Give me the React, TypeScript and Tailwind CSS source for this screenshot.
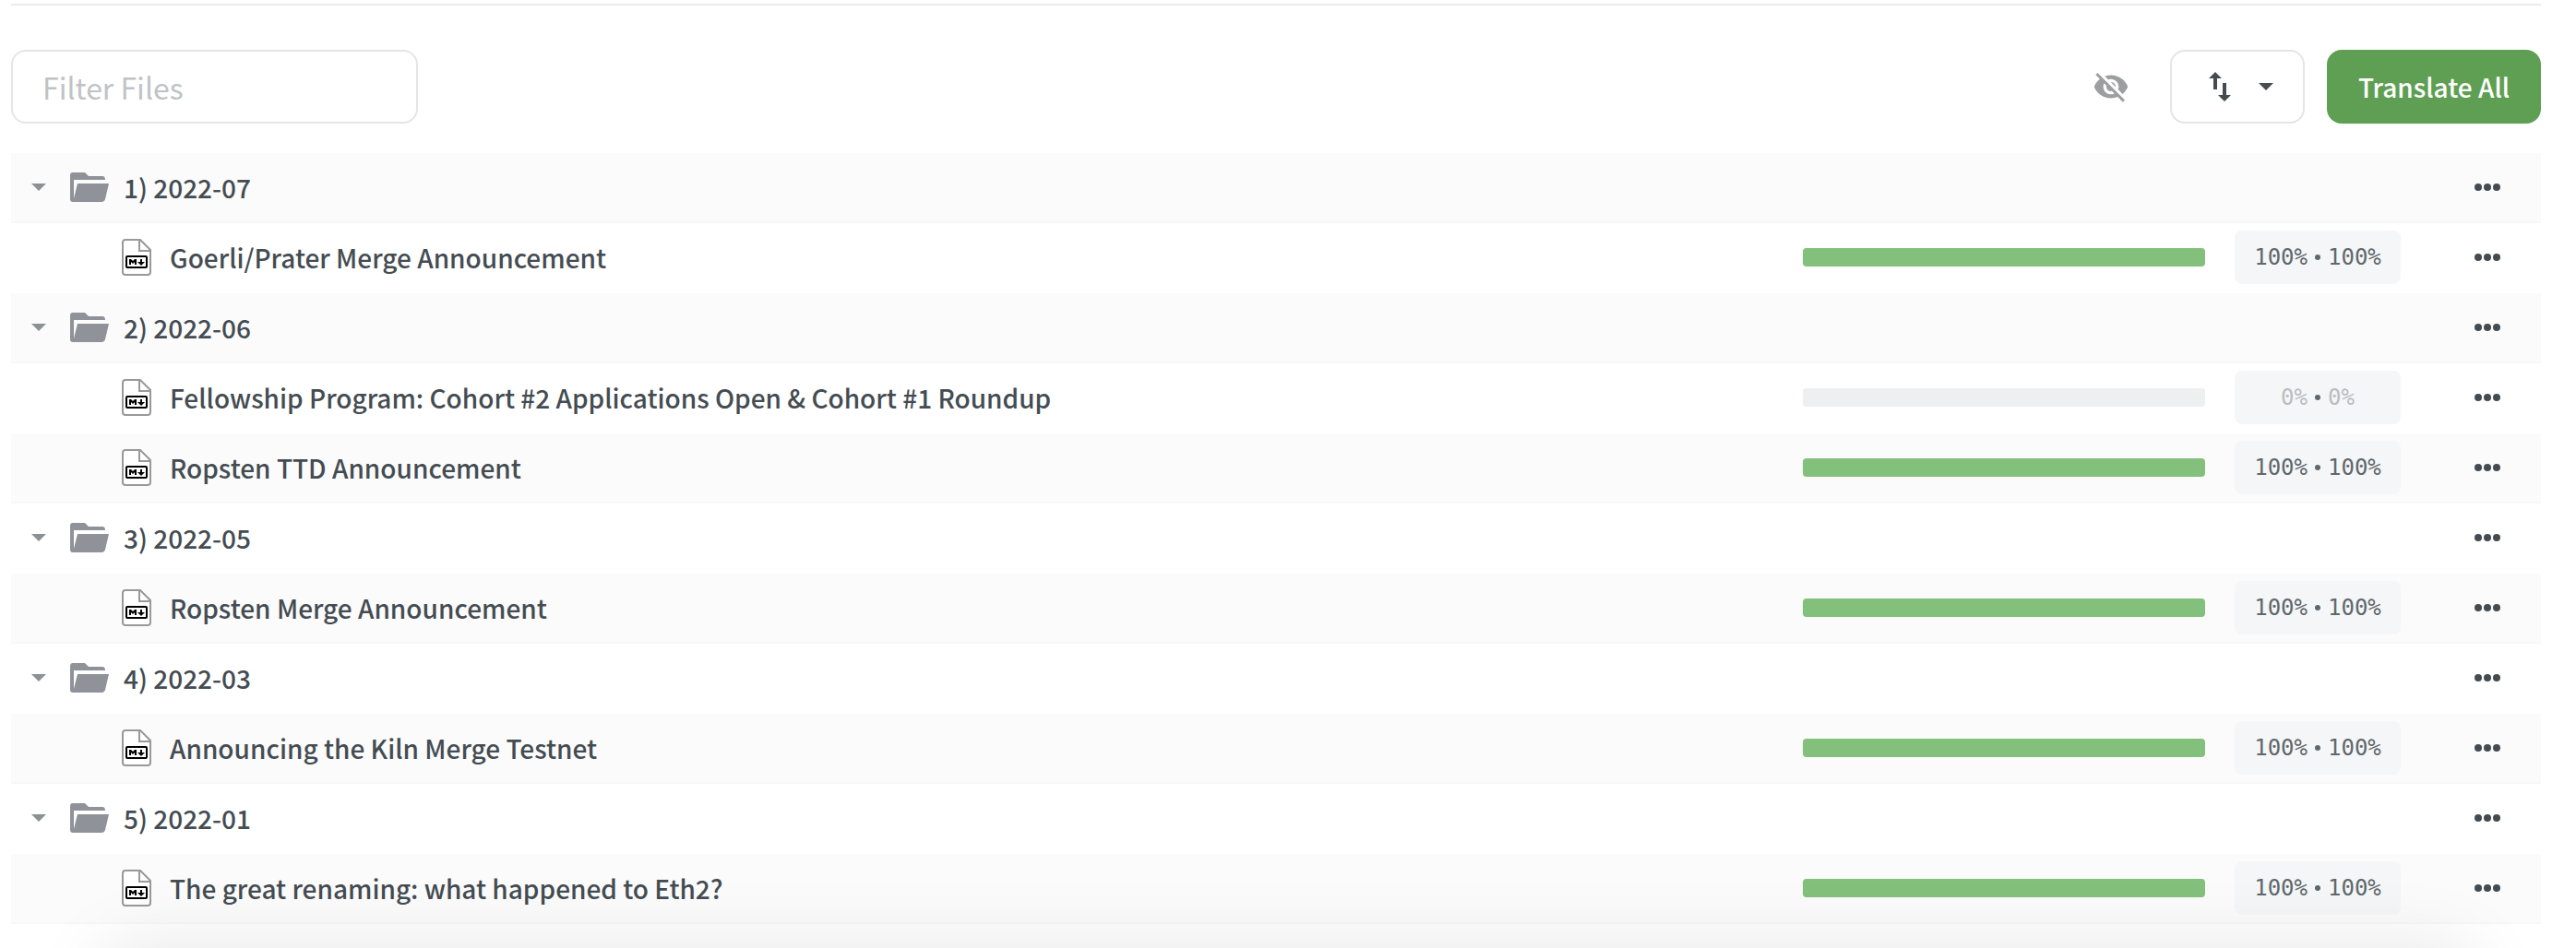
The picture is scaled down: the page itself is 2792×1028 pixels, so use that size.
import React from "react";

type Row =
  | { kind: "folder"; name: string }
  | { kind: "file"; name: string; translated: number; approved: number };

const rows: Row[] = [
  { kind: "folder", name: "1) 2022-07" },
  { kind: "file", name: "Goerli/Prater Merge Announcement", translated: 100, approved: 100 },
  { kind: "folder", name: "2) 2022-06" },
  { kind: "file", name: "Fellowship Program: Cohort #2 Applications Open & Cohort #1 Roundup", translated: 0, approved: 0 },
  { kind: "file", name: "Ropsten TTD Announcement", translated: 100, approved: 100 },
  { kind: "folder", name: "3) 2022-05" },
  { kind: "file", name: "Ropsten Merge Announcement", translated: 100, approved: 100 },
  { kind: "folder", name: "4) 2022-03" },
  { kind: "file", name: "Announcing the Kiln Merge Testnet", translated: 100, approved: 100 },
  { kind: "folder", name: "5) 2022-01" },
  { kind: "file", name: "The great renaming: what happened to Eth2?", translated: 100, approved: 100 },
];

function Caret() {
  return (
    <svg aria-hidden="true" viewBox="0 0 16 8" className="h-2 w-4 fill-current">
      <path d="M0 0h16L8 8z" />
    </svg>
  );
}

function FolderIcon() {
  return (
    <svg aria-hidden="true" viewBox="0 0 42 32" className="h-8 w-[42px] shrink-0 fill-[#8f9299]">
      <path d="M3 0h13l4 4h15q3 0 3 4H4v20L8 12h34l-4 17q-1 3-4 3H3q-3 0-3-3V3q0-3 3-3z" />
    </svg>
  );
}

function MarkdownFileIcon() {
  return (
    <svg aria-hidden="true" viewBox="0 0 32 40" className="h-10 w-8 shrink-0">
      <path d="M20 1H4Q1 1 1 4v32q0 3 3 3h24q3 0 3-3V12L20 1z" fill="#fff" stroke="#999" strokeWidth="2" />
      <path d="M19 1v12h12" fill="none" stroke="#999" strokeWidth="2" />
      <rect x="5" y="19" width="22" height="12" rx="1" fill="#fff" stroke="#000" strokeWidth="2" />
      <path d="M8 28v-6h2l2 2 2-2h2v6h-2v-3l-2 2-2-2v3zM20 22h2v3h3l-4 4-4-4h3z" fill="#000" />
    </svg>
  );
}

function MoreButton({ name }: { name: string }) {
  return (
    <button type="button" aria-label={`Actions for ${name}`} className="flex h-10 w-10 items-center justify-center text-[#444c52]">
      <svg aria-hidden="true" viewBox="0 0 28 8" className="h-2 w-7 fill-current">
        <circle cx="4" cy="4" r="4" />
        <circle cx="14" cy="4" r="4" />
        <circle cx="24" cy="4" r="4" />
      </svg>
    </button>
  );
}

function FileStatus({ row }: { row: Extract<Row, { kind: "file" }> }) {
  const tone = row.translated === 0 ? "text-[#b9bdbf]" : "text-[#5f686b]";
  return (
    <div className="flex items-center justify-end gap-8">
      <div
        role="progressbar"
        aria-label={`${row.name} progress`}
        aria-valuenow={row.translated}
        className="h-5 w-[436px] overflow-hidden rounded bg-[#eeeff0]"
      >
        <div className="h-full bg-[#83c07b]" style={{ width: `${row.translated}%` }} />
      </div>
      <div className="flex h-[58px] w-[180px] items-center justify-center gap-2 rounded-lg bg-[#f5f6f8] font-['DejaVu_Sans_Mono',monospace] text-[24px] font-normal">
        <span className={tone}>{row.translated}%</span>
        <span className="h-[6px] w-[6px] rounded-full bg-[#5f686b]" />
        <span className={tone}>{row.approved}%</span>
      </div>
    </div>
  );
}

export default function App() {
  return (
    <main className="relative min-h-screen overflow-hidden bg-white pt-1 pr-[38px] pl-3 font-['Noto_Sans_CJK_SC','Open_Sans',sans-serif] text-[#444c52]">
      <div className="border-t-2 border-[#ebebeb] pt-12 pb-8">
        <div className="flex items-center">
          <input
            type="text"
            aria-label="Filter Files"
            placeholder="Filter Files"
            className="h-20 w-[441px] rounded-2xl border-2 border-[#e5e5e5] px-8 text-[32px] outline-none placeholder:text-[#bfc3c5]"
          />
          <div className="ml-auto flex items-center">
            <button type="button" aria-label="Show hidden files" className="mr-11 text-[#9b9fa2]">
              <svg aria-hidden="true" viewBox="0 0 24 24" className="h-10 w-10 fill-current">
                <path d="M12 7c2.76 0 5 2.24 5 5 0 .65-.13 1.26-.36 1.83l2.92 2.92c1.51-1.26 2.7-2.89 3.43-4.75-1.73-4.39-6-7.5-11-7.5-1.4 0-2.74.25-3.98.7l2.16 2.16C10.74 7.13 11.35 7 12 7zM2 4.27l2.28 2.28.46.46C3.08 8.3 1.78 10.02 1 12c1.73 4.39 6 7.5 11 7.5 1.55 0 3.03-.3 4.38-.84l.42.42L19.73 22 21 20.73 3.27 3 2 4.27zM7.53 9.8l1.55 1.55c-.05.21-.08.43-.08.65 0 1.66 1.34 3 3 3 .22 0 .44-.03.65-.08l1.55 1.55c-.67.33-1.41.53-2.2.53-2.76 0-5-2.24-5-5 0-.79.2-1.53.53-2.2zm4.31-.78l3.15 3.15.02-.16c0-1.66-1.34-3-3-3l-.17.01z" />
              </svg>
            </button>
            <button
              type="button"
              aria-label="Sort files"
              className="mr-6 flex h-20 w-[146px] items-center justify-center gap-[30px] rounded-2xl border-2 border-[#e5e5e5] pl-2"
            >
              <svg aria-hidden="true" viewBox="0 0 24 32" className="h-8 w-6 fill-current">
                <path d="M7 0l7 7H9v12H5V7H0zM15 12h4v13h5l-7 7-7-7h5z" />
              </svg>
              <Caret />
            </button>
            <button type="button" className="h-20 w-[232px] rounded-2xl bg-[#5f9f53] text-[28px] font-medium text-white">
              Translate All
            </button>
          </div>
        </div>
      </div>

      <table aria-label="Files" className="w-full border-separate border-spacing-0">
        <tbody>
          {rows.map((row) => (
            <tr
              key={row.name}
              className="h-[76px] text-[28px] font-medium odd:bg-[#fbfbfb] [&>td]:border-b-2 [&>td]:border-white odd:[&>td]:border-[#f7f7f7]"
            >
              <td className="p-0">
                {row.kind === "folder" ? (
                  <div className="flex items-center pl-[22px]">
                    <button type="button" aria-label={`Collapse ${row.name}`} className="mr-[26px] text-[#8b9194]">
                      <Caret />
                    </button>
                    <FolderIcon />
                    <span className="ml-4 leading-10">{row.name}</span>
                  </div>
                ) : (
                  <div className="flex items-center pl-[120px]">
                    <MarkdownFileIcon />
                    <a href="#" className="ml-5 leading-10">{row.name}</a>
                  </div>
                )}
              </td>
              <td className="w-[648px] p-0">{row.kind === "file" && <FileStatus row={row} />}</td>
              <td className="w-[152px] p-0 pl-[74px]">
                <MoreButton name={row.name} />
              </td>
            </tr>
          ))}
        </tbody>
      </table>
      <div aria-hidden="true" className="pointer-events-none absolute inset-x-28 top-full h-40 rounded-3xl shadow-[0_0_80px_rgba(0,0,0,0.1)]" />
    </main>
  );
}
